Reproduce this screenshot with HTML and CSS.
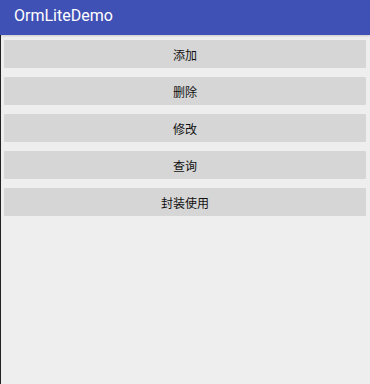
FILE: index.html
```html
<!DOCTYPE html>
<html lang="zh">

<head>
    <meta charset="UTF-8">
    <meta name="viewport" content="width=device-width, initial-scale=1.0">
    <title>OrmLiteDemo</title>
    <link rel="stylesheet" href="styles.css">
</head>

<body>

    <!-- Action Bar -->
    <div class="toolbar">
        <span class="title">OrmLiteDemo</span>
    </div>

    <!-- Buttons -->
    <div class="content">
        <button class="btn">添加</button>
        <button class="btn">删除</button>
        <button class="btn">修改</button>
        <button class="btn">查询</button>
        <button class="btn">封装使用</button>
    </div>

</body>

</html>
```

FILE: styles.css
```css
html,
body {
    margin: 0;
    padding: 0;
    height: 100%;
}

body {
    font-family: Roboto, "Noto Sans CJK SC", sans-serif;
    background-color: #eeeeee;
    display: flex;
    flex-direction: column;
    overflow: hidden;
}

.toolbar {
    height: 35px;
    background-color: #3f51b5;
    display: flex;
    align-items: center;
    padding-left: 14px;
    box-shadow: 0 1px 2px rgba(0, 0, 0, 0.15);
    position: relative;
    z-index: 1;
}

.toolbar .title {
    color: #fff;
    font-size: 16px;
    margin-top: -4px;
}

.content {
    flex-grow: 1;
    display: flex;
    flex-direction: column;
    gap: 9px;
    padding: 5px 4px 0 4px;
    border-left: 1px solid #222;
}

.btn {
    height: 28px;
    margin-left: -1px;
    background-color: #d6d6d6;
    border: none;
    border-radius: 1px;
    font-family: Roboto, "Noto Sans CJK SC", sans-serif;
    font-size: 12px;
    color: #111;
    padding: 0;
    cursor: pointer;
}
```
